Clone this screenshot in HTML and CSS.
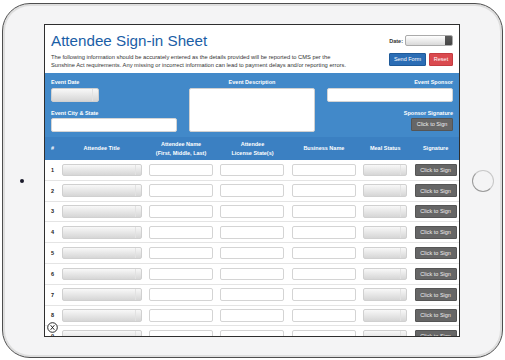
FILE: index.html
```html
<!DOCTYPE html>
<html lang="en">
<head>
    <meta charset="UTF-8">
    <title>Attendee Sign-in Sheet</title>
    <link rel="stylesheet" href="styles.css">
</head>
<body>

<div class="ipad">
    <div class="camera"></div>

    <div class="screen">
        <!-- header -->
        <div class="header">
            <div class="intro">
                <h1>Attendee Sign-in Sheet</h1>
                <p>The following information should be accurately entered as the details provided will be reported to CMS per the<br>
                Sunshine Act requirements. Any missing or incorrect information can lead to payment delays and/or reporting errors.</p>
            </div>
            <div class="actions">
                <div class="date-row">
                    <label>Date:</label>
                    <select class="date-select"></select>
                </div>
                <div class="buttons">
                    <button class="btn-send">Send Form</button>
                    <button class="btn-reset">Reset</button>
                </div>
            </div>
        </div>

        <!-- event details -->
        <div class="event">
            <div class="col">
                <label>Event Date</label>
                <select class="pick small"></select>
                <label class="second">Event City &amp; State</label>
                <input type="text">
            </div>
            <div class="col center">
                <label>Event Description</label>
                <textarea></textarea>
            </div>
            <div class="col right">
                <label>Event Sponsor</label>
                <input type="text">
                <label class="second">Sponsor Signature</label>
                <button class="sign">Click to Sign</button>
            </div>
        </div>

        <!-- attendees -->
        <div class="table">
            <div class="grid thead">
                <div class="num">#</div>
                <div>Attendee Title</div>
                <div>Attendee Name<br>(First, Middle, Last)</div>
                <div>Attendee<br>License State(s)</div>
                <div>Business Name</div>
                <div>Meal Status</div>
                <div>Signature</div>
            </div>
            <div id="rows"></div>
        </div>

        <svg class="close" width="11" height="11" viewBox="0 0 11 11">
            <circle cx="5.5" cy="5.5" r="4.8" fill="#fff" stroke="#111" stroke-width="0.9"/>
            <path d="M3.6 3.2 L7.4 7.8 M7.4 3.2 L3.6 7.8" stroke="#111" stroke-width="0.9" fill="none"/>
        </svg>
    </div>

    <div class="home"></div>
</div>

<script>
    const rows = document.getElementById("rows");
    for (let i = 1; i <= 9; i++) {
        const row = document.createElement("div");
        row.className = "grid row";
        row.innerHTML =
            `<div class="num">${i}</div>` +
            `<select class="pick"></select>` +
            `<input type="text"><input type="text"><input type="text">` +
            `<select class="pick"></select>` +
            `<button class="sign">Click to Sign</button>`;
        rows.appendChild(row);
    }
</script>

</body>
</html>
```

FILE: styles.css
```css
body { margin: 0; background: #fff; font-family: "Liberation Sans", Arial, sans-serif; }

.ipad {
    box-sizing: border-box;
    width: 501px;
    height: 355px;
    margin: 3px 0 0 2px;
    border: 1px solid #4e4e4e;
    border-radius: 28px;
    background: #f4f4f5;
    box-shadow: inset 0 0 0 2px #dedede;
    display: flex;
    align-items: center;
}
.camera { width: 4px; height: 4px; border-radius: 50%; background: #1b1b2b; margin-left: 17px; }
.home {
    box-sizing: border-box;
    width: 22px;
    height: 22px;
    margin-left: 12px;
    border-radius: 50%;
    border: 1.3px solid #9a9a9a;
    border-top-color: #c8c8c8;
    border-right-color: #c8c8c8;
}

.screen {
    position: relative;
    box-sizing: border-box;
    width: 416px;
    height: 313px;
    margin-left: 20px;
    border: 1px solid #2e2e2e;
    background: #fff;
    overflow: hidden;
}

/* header */
.header { display: flex; justify-content: space-between; padding: 7px 6px 4px; height: 48px; box-sizing: border-box; }
h1 { margin: 0; font-size: 15.2px; line-height: 18px; font-weight: normal; color: #1b5ea6; }
.intro p { margin: 3px 0 0; font-size: 5.75px; line-height: 8px; color: #333; white-space: nowrap; }

.actions { display: flex; flex-direction: column; align-items: flex-end; padding-top: 3px; }
.date-row { display: flex; align-items: center; gap: 2px; }
.date-row label { font-size: 5.5px; font-weight: bold; color: #333; }
.date-select {
    appearance: none;
    width: 48px;
    height: 11px;
    border: 1px solid #aaa;
    border-radius: 2px;
    background: linear-gradient(#5a5a5a, #444) right / 7px 100% no-repeat, linear-gradient(#fff, #d9d9d9);
}
.buttons { display: flex; gap: 3px; margin-top: 7px; }
.buttons button {
    height: 12.5px;
    padding: 0;
    border-radius: 1px;
    font-family: inherit;
    font-size: 5.5px;
    color: #fff;
}
.btn-send { width: 37px; background: #2b6db5; border: 1px solid #1f5a99; }
.btn-reset { width: 24px; background: #da4a4f; border: 1px solid #c43c41; }

/* event panel */
.event {
    display: grid;
    grid-template-columns: 126px 126px 126px;
    gap: 12px;
    padding: 6px 6px 5px;
    height: 64px;
    box-sizing: border-box;
    background: #4289c9;
}
.col { display: flex; flex-direction: column; align-items: flex-start; }
.col.center { align-items: center; }
.col.right { align-items: flex-end; }
.col label { font-size: 5.5px; line-height: 6px; font-weight: bold; color: #fff; margin-bottom: 3px; }
.col label.second { margin-top: 8px; margin-bottom: 2px; }
.col input { width: 126px; }
textarea {
    box-sizing: border-box;
    width: 126px;
    height: 44px;
    border: 1px solid #d0d0d0;
    border-radius: 2px;
    resize: none;
    margin: 0;
}

input {
    box-sizing: border-box;
    height: 14px;
    border: 1px solid #d4d4d4;
    border-radius: 2px;
    background: #fff;
    margin: 0;
    padding: 0;
}
.pick {
    appearance: none;
    box-sizing: border-box;
    height: 12.5px;
    margin: 0;
    border: 1px solid #d0d0d0;
    border-radius: 2px;
    background: linear-gradient(#e2e2e2, #e2e2e2) right 5px top 0 / 1px 100% no-repeat,
                linear-gradient(#f8f8f8, #d6d6d6);
}
.pick.small { width: 48px; height: 14px; }

.sign {
    box-sizing: border-box;
    width: 42px;
    height: 12.5px;
    padding: 0;
    border: 1px solid #555;
    border-radius: 1px;
    background: #666;
    color: #eee;
    font-family: inherit;
    font-size: 5.5px;
}

/* attendee table */
.grid {
    display: grid;
    grid-template-columns: 3.3px 80px 64px 64px 64px 44px 42px;
    column-gap: 7.4px;
    padding-left: 6px;
    align-items: center;
}
.thead {
    height: 23px;
    background: #3b80c2;
    color: #fff;
    font-size: 5.5px;
    line-height: 9px;
    font-weight: bold;
    text-align: center;
}
.thead > div { white-space: nowrap; }
.thead .num { text-align: left; }
.row { height: 20.8px; border-bottom: 1px solid #e4e4e4; box-sizing: border-box; }
.row input { height: 12.5px; }
.num { font-size: 5.5px; font-weight: bold; color: #222; }
.thead .num { color: #fff; }

.close { position: absolute; left: 2px; top: 297px; }
```
